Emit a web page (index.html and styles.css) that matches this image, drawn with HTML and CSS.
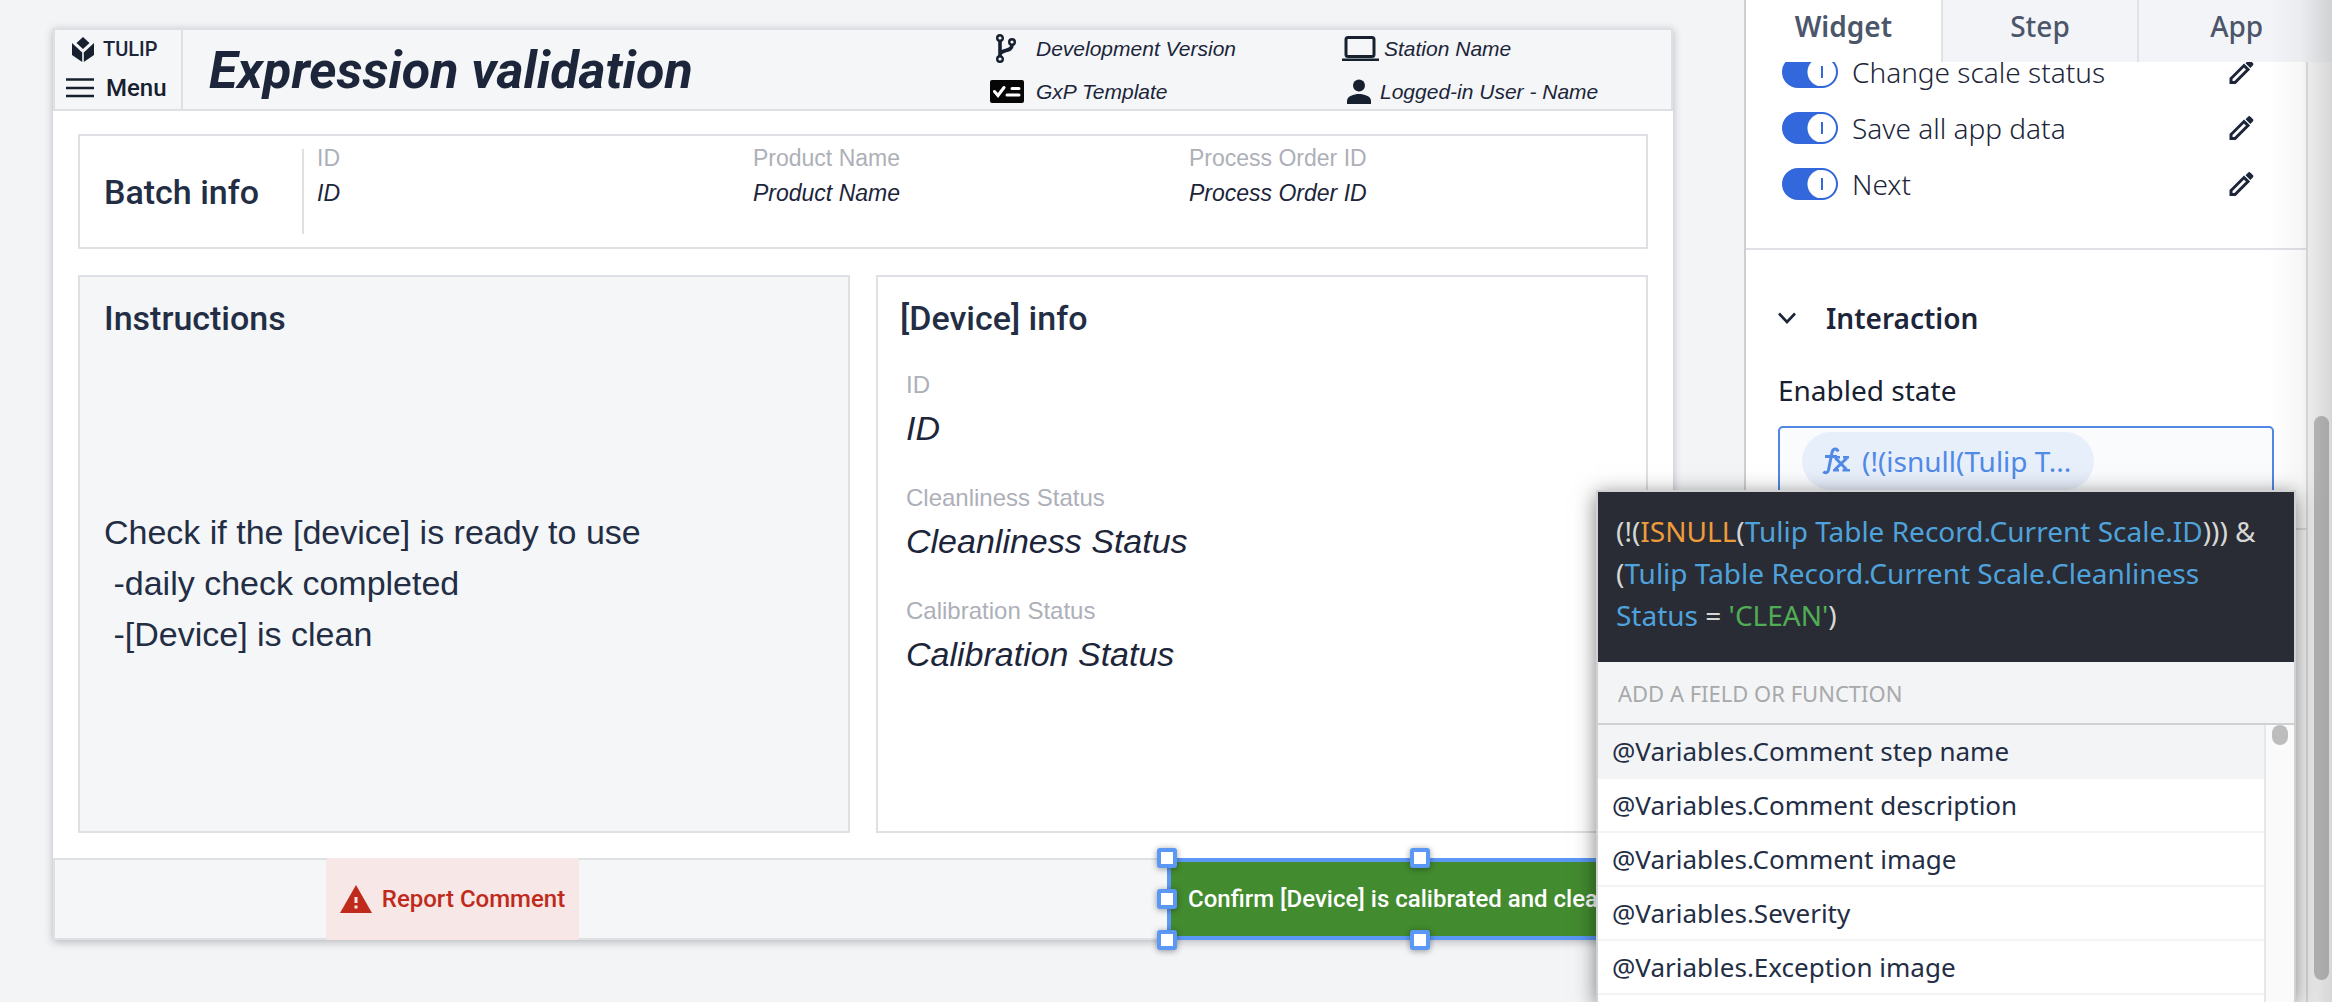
FILE: index.html
```html
<!DOCTYPE html>
<html lang="en">
<head>
<meta charset="utf-8">
<title>Expression validation - App editor</title>
<link rel="stylesheet" href="styles.css">
</head>
<body>
<main class="workspace">
  <section class="canvas">
    <header class="app-header">
      <div class="brand">
        <div class="brand-row">
          <svg class="logo" viewBox="0 0 22 25" aria-hidden="true"><path d="M11 0l6.500 6-6.500 6-6.500-6z"/><path d="M0 6l10.200 9.500V25L0 18z"/><path d="M22 6l-10.200 9.500V25L22 18z"/></svg>
          <span class="brand-name">TULIP</span>
        </div>
        <button class="menu-button" type="button">
          <svg class="menu-icon" viewBox="0 0 28 20" aria-hidden="true"><path d="M0 1.500h28M0 10h28M0 18h28" stroke="currentColor" stroke-width="2.600"/></svg>
          Menu
        </button>
      </div>
      <h1 class="title">Expression validation</h1>
      <div class="meta">
        <div class="meta-item"><svg class="meta-icon" viewBox="0 0 34 30" aria-hidden="true"><g fill="none" stroke="currentColor" stroke-width="2.400"><circle cx="10" cy="4" r="2.800"/><circle cx="10" cy="25" r="2.800"/><circle cx="22" cy="8" r="2.800"/><path d="M10 7v15M22 11c0 7-10 4-12 9" stroke-width="3.600"/></g></svg>Development Version</div>
        <div class="meta-item"><svg class="meta-icon black" viewBox="0 0 34 30" aria-hidden="true"><rect x="0" y="3" width="34" height="23" rx="2" fill="currentColor"/><path d="M4.500 14.500l3.500 4 6-8M22 11.500h7M17 18h12" fill="none" stroke="#fff" stroke-width="3" stroke-linecap="round"/></svg>GxP Template</div>
      </div>
      <div class="meta meta-station">
        <div class="meta-item"><svg class="meta-icon wide" viewBox="0 0 38 30" aria-hidden="true"><path d="M1 24.500h37V27H1z" fill="currentColor"/><rect x="5" y="3.500" width="28" height="19" rx="2" fill="none" stroke="currentColor" stroke-width="3"/></svg>Station Name</div>
        <div class="meta-item"><svg class="meta-icon" viewBox="0 0 34 30" aria-hidden="true"><g fill="currentColor"><circle cx="18" cy="8.500" r="6"/><path d="M6 27v-3c0-5 7-7 12-7s12 2 12 7v3z"/></g></svg>Logged-in User - Name</div>
      </div>
    </header>

    <div class="canvas-body">
      <section class="card batch">
        <h2 class="card-title batch-title">Batch info</h2>
        <dl class="batch-fields">
          <div class="batch-field"><dt>ID</dt><dd>ID</dd></div>
          <div class="batch-field"><dt>Product Name</dt><dd>Product Name</dd></div>
          <div class="batch-field"><dt>Process Order ID</dt><dd>Process Order ID</dd></div>
        </dl>
      </section>
      <div class="columns">
        <section class="card instructions">
          <h2 class="card-title">Instructions</h2>
          <p class="steps">Check if the [device] is ready to use
 -daily check completed
 -[Device] is clean</p>
        </section>
        <section class="card device">
          <h2 class="card-title">[Device] info</h2>
          <dl class="device-fields">
            <div class="device-field"><dt>ID</dt><dd>ID</dd></div>
            <div class="device-field"><dt>Cleanliness Status</dt><dd>Cleanliness Status</dd></div>
            <div class="device-field"><dt>Calibration Status</dt><dd>Calibration Status</dd></div>
          </dl>
        </section>
      </div>
    </div>

    <footer class="app-footer">
      <button class="report" type="button">
        <svg class="warn-icon" viewBox="0 0 32 28" aria-hidden="true"><path d="M16 0l16 28H0z" fill="currentColor"/><path d="M16 12v6M16 20.500v3" stroke="#f7e7e6" stroke-width="3"/></svg>
        Report Comment
      </button>
      <div class="selection">
        <button class="confirm" type="button">Confirm [Device] is calibrated and clean</button>
        <i class="handle top left"></i><i class="handle top center"></i><i class="handle top right"></i>
        <i class="handle middle left"></i><i class="handle middle right"></i>
        <i class="handle bottom left"></i><i class="handle bottom center"></i><i class="handle bottom right"></i>
      </div>
    </footer>
  </section>
</main>

<aside class="panel">
  <nav class="tabs">
    <button class="tab active" type="button">Widget</button>
    <button class="tab" type="button">Step</button>
    <button class="tab" type="button">App</button>
  </nav>
  <div class="panel-main">
    <div class="panel-content">
      <section class="triggers">
        <div class="trigger">
          <label class="trigger-label"><input class="toggle" type="checkbox" checked>Change scale status</label>
          <button class="edit" type="button" aria-label="Edit"><svg viewBox="0 0 24 24" aria-hidden="true"><path d="M1.500 22.500v-4L14.500 5.500l4 4L5.500 22.500z" fill="none" stroke="currentColor" stroke-width="3"/><path d="M16 3.200l2.500-2.500c.8-.8 1.700-.8 2.500 0l2.300 2.300c.8.800.8 1.700 0 2.500L20.800 8z" fill="currentColor"/></svg></button>
        </div>
        <div class="trigger">
          <label class="trigger-label"><input class="toggle" type="checkbox" checked>Save all app data</label>
          <button class="edit" type="button" aria-label="Edit"><svg viewBox="0 0 24 24" aria-hidden="true"><path d="M1.500 22.500v-4L14.500 5.500l4 4L5.500 22.500z" fill="none" stroke="currentColor" stroke-width="3"/><path d="M16 3.200l2.500-2.500c.8-.8 1.700-.8 2.500 0l2.300 2.300c.8.800.8 1.700 0 2.500L20.800 8z" fill="currentColor"/></svg></button>
        </div>
        <div class="trigger">
          <label class="trigger-label"><input class="toggle" type="checkbox" checked>Next</label>
          <button class="edit" type="button" aria-label="Edit"><svg viewBox="0 0 24 24" aria-hidden="true"><path d="M1.500 22.500v-4L14.500 5.500l4 4L5.500 22.500z" fill="none" stroke="currentColor" stroke-width="3"/><path d="M16 3.200l2.500-2.500c.8-.8 1.700-.8 2.500 0l2.300 2.300c.8.800.8 1.700 0 2.500L20.800 8z" fill="currentColor"/></svg></button>
        </div>
      </section>
      <section class="interaction">
        <button class="section-head" type="button">
          <svg class="chevron" viewBox="0 0 18 12" aria-hidden="true"><path d="M1 1.500l8 8.500 8-8.500" fill="none" stroke="currentColor" stroke-width="2.600"/></svg>
          Interaction
        </button>
        <div class="field-label">Enabled state</div>
        <div class="expression-box">
          <button class="pill" type="button"><svg class="fx" viewBox="0 0 28 28" aria-hidden="true"><g fill="none" stroke="currentColor" stroke-width="3"><path d="M16 4.500c-1-3.500-5-3.500-6 1L6.500 23c-.6 3-3.500 3.500-5 1.500M3 9.500h12"/><path d="M13.500 11l11 11.500M25 11L13 22.500"/><path d="M12 10.300h6M21 10.300h6M11 23.200h6M20.500 23.200H28" stroke-width="2.600"/></g></svg>(!(isnull(Tulip T...</button>
        </div>
      </section>
    </div>
    <div class="scrollbar"><div class="scroll-thumb"></div></div>
  </div>
  <div class="edge-shade"></div>

  <div class="editor">
    <code class="formula">(!(<span class="fn">ISNULL</span>(<span class="ref">Tulip Table Record.Current Scale.ID</span>))) &amp; (<span class="ref">Tulip Table Record.Current Scale.Cleanliness Status</span> = <span class="str">'CLEAN'</span>)</code>
    <div class="editor-hint">ADD A FIELD OR FUNCTION</div>
    <div class="options">
      <ul class="option-list">
        <li class="option current">@Variables.Comment step name</li>
        <li class="option">@Variables.Comment description</li>
        <li class="option">@Variables.Comment image</li>
        <li class="option">@Variables.Severity</li>
        <li class="option">@Variables.Exception image</li>
      </ul>
      <div class="option-scroll"><div class="option-thumb"></div></div>
    </div>
  </div>
</aside>
</body>
</html>
```
FILE: styles.css
```css
* { box-sizing: border-box; }

body {
  margin: 0;
  height: 100vh;
  display: flex;
  overflow: hidden;
  background: #f3f4f6;
  color: #1c2539;
  font-family: "Noto Sans", sans-serif;
}

h1, h2, p, dl, dd, ul { margin: 0; padding: 0; }
button { border: 0; background: none; padding: 0; color: inherit; font: inherit; }

/* Canvas */
.workspace { flex: 1; min-width: 0; padding: 28px 71px 0 53px; }
.canvas { background: #fff; box-shadow: 0 2px 8px rgba(40, 45, 60, .3); }

.app-header {
  display: flex;
  height: 83px;
  background: #f4f6f8;
  border: 2px solid #dfe0e3;
  font-family: "Liberation Sans", sans-serif;
}
.brand {
  width: 128px;
  padding: 6px 0 0 11px;
  border-right: 2px solid #dfe0e3;
  font-family: Roboto, sans-serif;
  font-weight: 500;
}
.brand-row { display: flex; align-items: center; gap: 9px; height: 26px; padding-left: 6px; font-size: 20px; }
.logo { width: 22px; height: 25px; fill: #16202f; }
.menu-button { display: flex; align-items: center; gap: 12px; height: 28px; margin-top: 12px; font-size: 24px; color: #16202f; }
.menu-icon { width: 28px; height: 20px; }
.title {
  flex: 1;
  padding-left: 26px;
  font: italic 700 52px/82px Roboto, sans-serif;
  white-space: nowrap;
}
.meta { width: 351px; font-size: 21px; font-style: italic; }
.meta-station { width: 330px; }
.meta-item { display: flex; align-items: center; height: 38px; gap: 12px; margin-bottom: 5px; }
.meta-station .meta-item { gap: 5px; }
.meta-icon { width: 34px; height: 30px; color: #16202f; }
.meta-icon.wide { width: 38px; }
.meta-icon.black { color: #060606; }

.canvas-body { padding: 23px 25px 25px; }
.card { border: 2px solid #dfe0e5; }
.card-title { font: 500 34px/40px Roboto, sans-serif; color: #232e45; }
.batch { display: flex; height: 115px; font-family: "Liberation Sans", sans-serif; font-size: 23px; }
.batch-title { width: 222px; padding: 36px 0 0 24px; }
.batch-fields {
  flex: 1;
  display: flex;
  margin: 13px 0;
  border-left: 2px solid #dfe0e5;
  padding-left: 13px;
}
.batch-field { width: 436px; line-height: 28px; margin-top: -5px; }
.batch-field dd { margin-top: 7px; font-style: italic; }
dt { color: #adb0b8; }

.columns { display: grid; grid-template-columns: 1fr 1fr; gap: 26px; margin-top: 26px; }
.columns .card { height: 558px; padding: 21px 24px; font-family: "Liberation Sans", sans-serif; }
.instructions { background: #f4f6f8; }
.steps { white-space: pre-wrap; margin-top: 169px; font-size: 34px; line-height: 51px; color: #232e45; }
.columns .device { padding-left: 22px; }
.device-fields { padding: 33px 0 0 6px; }
.device-field { height: 113px; font-size: 24px; line-height: 28px; }
.device-field dd { margin-top: 9px; font-size: 34px; line-height: 40px; font-style: italic; }

.app-footer {
  display: flex;
  justify-content: space-between;
  height: 82px;
  background: #f4f6f8;
  border: 2px solid #dfe0e3;
}
.report {
  display: flex;
  align-items: center;
  justify-content: center;
  gap: 10px;
  width: 253px;
  margin: -2px 0 -2px 271px;
  border-radius: 3px;
  background: #f7e7e6;
  color: #c02a1c;
  font: 500 24px/28px Roboto, sans-serif;
}
.warn-icon { width: 32px; height: 28px; }
.selection { position: relative; width: 506px; margin: -2px; }
.confirm {
  width: 100%;
  height: 100%;
  padding-left: 17px;
  border: 4px solid #5b97f5;
  background: #438b2f;
  color: #fff;
  font: 500 24px/28px Roboto, sans-serif;
  text-align: left;
}
.handle {
  position: absolute;
  width: 20px;
  height: 20px;
  border: 4px solid #5b97f5;
  border-radius: 3px;
  background: #fff;
  box-shadow: 0 1px 6px rgba(0, 0, 0, .4);
  transform: translate(-50%, -50%);
}
.handle.left { left: 0; }
.handle.center { left: 50%; }
.handle.right { left: 100%; }
.handle.top { top: 0; }
.handle.middle { top: 50%; }
.handle.bottom { top: 100%; }

/* Side panel */
.panel {
  position: relative;
  width: 588px;
  display: flex;
  flex-direction: column;
  background: #fff;
  border-left: 2px solid #cdcfd2;
  font-size: 28px;
}
.tabs { display: flex; height: 62px; flex: none; margin-right: -2px; background: #f3f4f7; color: #4b566b; }
.tab { flex: 1; padding-bottom: 11px; border-left: 2px solid #e1e2e5; font-weight: 500; }
.tab.active { background: #fff; border-left: 0; font-weight: 600; }
.panel-main { flex: 1; min-height: 0; display: flex; overflow: hidden; }
.panel-content { flex: 1; min-width: 0; }
.triggers { display: flow-root; height: 188px; padding: 0 52px 0 36px; border-bottom: 2px solid #e0e1e6; }
.trigger { display: flex; justify-content: space-between; align-items: center; height: 56px; }
.trigger:first-child { margin-top: -18px; }
.trigger-label { display: flex; align-items: center; gap: 14px; font-weight: 300; }
.toggle {
  appearance: none;
  width: 56px;
  height: 32px;
  margin: 0;
  border: 2px solid #3367dc;
  border-radius: 16px;
  background:
    linear-gradient(#3367dc, #3367dc) 37px 50% / 2px 12px no-repeat,
    radial-gradient(circle at 38px 50%, #fff 14px, #3367dc 15px);
}
.edit { width: 25px; height: 24px; }
.edit svg { display: block; width: 25px; height: 24px; }
.interaction { height: 280px; padding: 48px 32px 0; border-bottom: 2px solid #e0e1e6; }
.section-head { display: flex; align-items: center; gap: 30px; line-height: 40px; font-weight: 600; }
.chevron { width: 18px; height: 12px; }
.field-label { margin-top: 32px; line-height: 40px; color: #16202f; }
.expression-box {
  height: 74px;
  margin-top: 16px;
  padding: 4px 22px;
  border: 2px solid #4f87e3;
  border-radius: 5px;
  background: #fafbfd;
}
.pill {
  display: flex;
  align-items: center;
  gap: 12px;
  width: 292px;
  height: 58px;
  padding-left: 20px;
  border-radius: 29px;
  background: #e7effb;
  color: #5089e6;
}
.fx { width: 28px; height: 28px; }
.scrollbar {
  width: 26px;
  padding: 354px 3px 0 6px;
  border-left: 2px solid #e0e0e1;
  background: #fafafa;
}
.scroll-thumb { height: 564px; border-radius: 8px; background: #c1c1c1; }
.edge-shade {
  position: absolute;
  top: 0;
  right: 0;
  bottom: 0;
  width: 64px;
  background: linear-gradient(to right, rgba(0, 0, 0, 0), rgba(0, 0, 0, .03) 50%, rgba(0, 0, 0, .14));
  pointer-events: none;
}

/* Expression editor popup */
.editor {
  position: absolute;
  top: 490px;
  right: 36px;
  bottom: 0;
  width: 700px;
  display: flex;
  flex-direction: column;
  border: 2px solid #d0d1d3;
  border-bottom: 0;
  background: #fff;
  box-shadow: 0 4px 20px rgba(0, 0, 0, .5);
}
.formula {
  flex: none;
  height: 170px;
  padding: 18px 10px 0 18px;
  background: #292c34;
  color: #d7d8d5;
  font: 400 28px/42px "Noto Sans", sans-serif;
}
.fn { color: #ee9b3a; }
.ref { color: #4fa3dd; }
.str { color: #50ad55; }
.editor-hint {
  flex: none;
  height: 63px;
  padding-left: 20px;
  background: #f3f4f6;
  border-bottom: 2px solid #d0d1d3;
  color: #a8a9aa;
  font-size: 22px;
  line-height: 62px;
}
.options { display: flex; flex: 1; min-height: 0; overflow: hidden; }
.option-list { flex: 1; list-style: none; font-size: 26px; color: #232e45; }
.option { height: 54px; padding-left: 14px; border-bottom: 2px solid #f3f4f6; line-height: 52px; }
.option.current { background: #f3f4f6; }
.option-scroll { width: 30px; padding: 0 6px; border-left: 2px solid #e7e7e8; background: #fafafa; }
.option-thumb { width: 16px; height: 20px; border-radius: 8px; background: #bdbdbe; }
```
